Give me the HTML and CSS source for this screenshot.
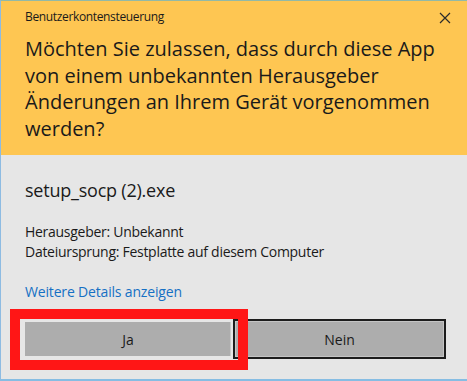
FILE: index.html
```html
<!DOCTYPE html>
<html lang="de">
<head>
<meta charset="utf-8">
<title>Benutzerkontensteuerung</title>
<link rel="stylesheet" href="styles.css">
</head>
<body>
<div class="window">
  <header class="banner">
    <div class="titlebar">
      <span class="title">Benutzerkontensteuerung</span>
      <svg class="close" width="12" height="12" viewBox="0 0 12 12" aria-hidden="true">
        <path d="M1 1 L11 11 M11 1 L1 11" stroke="#2b2b2b" stroke-width="1.2" fill="none"/>
      </svg>
    </div>
    <h1 class="question">Möchten Sie zulassen, dass durch diese App von einem unbekannten Herausgeber Änderungen an Ihrem Gerät vorgenommen werden?</h1>
  </header>
  <main class="body">
    <div class="appname">setup_socp (2).exe</div>
    <div class="info">
      <div>Herausgeber: Unbekannt</div>
      <div>Dateiursprung: Festplatte auf diesem Computer</div>
    </div>
    <a class="details" href="#">Weitere Details anzeigen</a>
    <div class="buttons">
      <button class="btn btn-yes">Ja</button>
      <button class="btn btn-no">Nein</button>
      <div class="highlight"></div>
    </div>
  </main>
</div>
</body>
</html>
```
FILE: styles.css
```css
html, body {
  margin: 0;
  padding: 0;
  width: 467px;
  height: 381px;
  overflow: hidden;
  background: #e6e6e6;
}

.window {
  box-sizing: border-box;
  width: 467px;
  height: 381px;
  border-left: 1px solid #8dbbe2;
  border-top: 1px solid #93b9a6;
  border-bottom: 2px solid #86bde3;
  display: flex;
  flex-direction: column;
  font-family: "Open Sans", "Noto Sans", sans-serif;
  color: #1a1a1a;
}

.banner {
  height: 154px;
  background: #fec652;
  padding-left: 24px;
  box-sizing: border-box;
}

.titlebar {
  display: flex;
  align-items: center;
  justify-content: space-between;
  padding-top: 8px;
  padding-right: 16px;
  height: 16px;
}

.title {
  font-size: 12px;
  line-height: 16px;
  letter-spacing: -0.35px;
}

.close {
  display: block;
  margin-top: 1px;
}

.question {
  margin: 11px 0 0 0;
  font-size: 20px;
  font-weight: normal;
  line-height: 26.5px;
  padding-right: 30px;
}

.body {
  flex: 1;
  background: #e6e6e6;
  padding: 23px 0 0 24px;
  display: flex;
  flex-direction: column;
  align-items: flex-start;
}

.appname {
  font-size: 18px;
  line-height: 24px;
  letter-spacing: -0.22px;
}

.info {
  margin-top: 20px;
  font-size: 14px;
  line-height: 20px;
  letter-spacing: -0.28px;
}

.details {
  margin-top: 20px;
  font-size: 14px;
  line-height: 20px;
  letter-spacing: -0.17px;
  color: #1570c4;
  text-decoration: none;
}

.buttons {
  position: relative;
  margin-top: 17px;
  margin-left: -2px;
  display: flex;
}

.btn {
  box-sizing: border-box;
  height: 40px;
  margin: 0;
  padding: 0;
  font-family: "Open Sans", "Noto Sans", sans-serif;
  font-size: 14px;
  color: #1a1a1a;
  background: #adadad;
}

.btn-yes {
  width: 210px;
  border: 2px solid #e6e6e6;
  border-top-width: 3px;
  border-bottom-width: 3px;
  box-shadow: inset -1px 0 0 #c9c9c9;
}

.btn-no {
  width: 213px;
  border: 2px solid #1c1c1c;
  box-shadow: inset 0 0 0 1px #c4c4c4;
}

.highlight {
  position: absolute;
  left: -13px;
  top: -10px;
  width: 238px;
  height: 61px;
  box-sizing: border-box;
  border: 10px solid #ff1616;
  pointer-events: none;
}
```
